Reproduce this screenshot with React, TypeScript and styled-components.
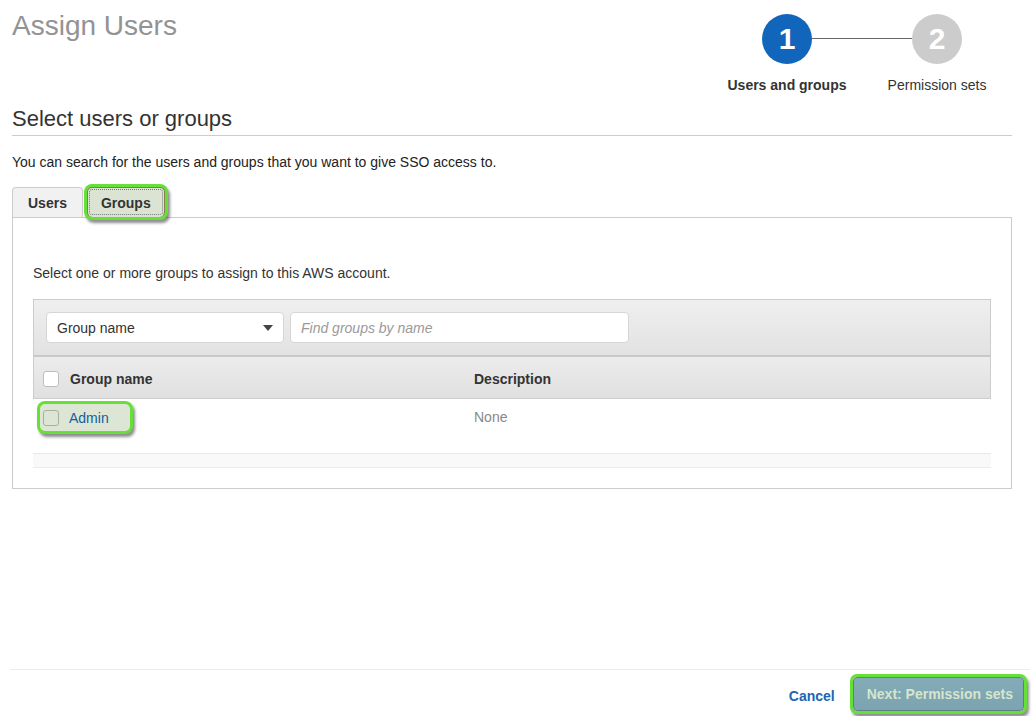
import React from "react";
import styled, { createGlobalStyle } from "styled-components";

const GlobalStyle = createGlobalStyle`
  html, body { margin: 0; padding: 0; background: #fff; }
  body {
    font-family: "Liberation Sans", Arial, Helvetica, sans-serif;
    color: #333;
    font-size: 14px;
  }
  * { box-sizing: border-box; }
`;

const HIGHLIGHT = `0 0 0 3px #66df38, 2px 3px 3px 3px rgba(0, 0, 0, 0.45)`;

const Page = styled.div`
  min-height: 100vh;
  display: flex;
  flex-direction: column;
`;

const Main = styled.main`
  flex: 1;
  width: 1012px;
  padding-left: 12px;
`;

const Header = styled.header`
  display: flex;
  justify-content: space-between;
  align-items: flex-start;
`;

const Title = styled.h1`
  margin: 0;
  padding-top: 9px;
  font-size: 28px;
  line-height: 34px;
  font-weight: normal;
  color: #939393;
`;

const Stepper = styled.div`
  display: flex;
  flex-direction: column;
  padding-top: 14px;
  width: 300px;
`;

const CircleRow = styled.div`
  display: flex;
  align-items: center;
  padding: 0 50px;
`;

const Circle = styled.div<{ $active?: boolean }>`
  width: 50px;
  height: 50px;
  border-radius: 50%;
  background: ${(p) => (p.$active ? "#1166bb" : "#cccccc")};
  color: #fff;
  font-weight: bold;
  font-size: 30px;
  display: flex;
  align-items: center;
  justify-content: center;
`;

const Connector = styled.div`
  flex: 1;
  height: 1px;
  margin-top: -2px;
  background: #666;
`;

const LabelRow = styled.div`
  display: flex;
  margin-top: 11px;
`;

const StepLabel = styled.div<{ $active?: boolean }>`
  width: 150px;
  text-align: center;
  line-height: 20px;
  font-size: 14px;
  color: #333;
  font-weight: ${(p) => (p.$active ? "bold" : "normal")};
`;

const SectionTitle = styled.h2`
  margin: 11px 0 0;
  font-size: 22px;
  line-height: 26px;
  font-weight: normal;
  color: #333;
  padding-bottom: 3px;
  border-bottom: 1px solid #cccccc;
`;

const Intro = styled.p`
  margin: 16px 0 0;
  line-height: 20px;
  color: #222;
`;

const TabBar = styled.div`
  display: flex;
  gap: 4px;
  margin-top: 15px;
  height: 30px;
  align-items: flex-end;
`;

const Tab = styled.div<{ $selected?: boolean }>`
  position: relative;
  z-index: 1;
  height: 30px;
  padding: 1px ${(p) => (p.$selected ? 13 : 15)}px 0;
  line-height: 29px;
  font-weight: bold;
  font-size: 14px;
  color: #333;
  border: 1px solid #cccccc;
  border-bottom: none;
  border-radius: 4px 4px 0 0;
  background: ${(p) => (p.$selected ? "#dbe4d2" : "#f1f1f1")};
  ${(p) =>
    p.$selected
      ? `border-radius: 5px; box-shadow: ${HIGHLIGHT}; border-color: #8b7a4a; outline: 1px dotted #777; outline-offset: -3px;`
      : ""}
`;

const Panel = styled.section`
  border: 1px solid #cccccc;
  padding: 45px 20px 20px 20px;
`;

const PanelText = styled.p`
  margin: 0;
  line-height: 20px;
  color: #333;
`;

const Table = styled.div`
  margin-top: 16px;
`;

const FilterBar = styled.div`
  display: flex;
  gap: 6px;
  padding: 12px 12px 12px;
  border: 1px solid #cccccc;
  border-bottom: 2px solid #c8c8c8;
  background: linear-gradient(#efefef, #e2e2e2);
`;

const Select = styled.div`
  width: 238px;
  height: 31px;
  background: #fff;
  border: 1px solid #d6d6d6;
  border-radius: 4px;
  padding: 0 10px;
  display: flex;
  align-items: center;
  justify-content: space-between;
  color: #333;
`;

const Caret = styled.span`
  width: 0;
  height: 0;
  border-left: 5px solid transparent;
  border-right: 5px solid transparent;
  border-top: 6px solid #444;
`;

const SearchInput = styled.input`
  width: 339px;
  height: 31px;
  border: 1px solid #d6d6d6;
  border-radius: 4px;
  padding: 0 10px;
  font-family: inherit;
  font-size: 14px;
  color: #333;
  background: #fff;
  outline: none;
  &::placeholder {
    color: #9a9a9a;
    font-style: italic;
  }
`;

const HeaderRow = styled.div`
  display: grid;
  grid-template-columns: 431px 1fr;
  align-items: center;
  height: 42px;
  padding-top: 2px;
  border: 1px solid #cccccc;
  border-top: none;
  background: linear-gradient(#ececec, #e0e0e0);
`;

const HeaderCell = styled.div`
  display: flex;
  align-items: center;
  gap: 11px;
  padding-left: 9px;
  font-weight: bold;
  color: #333;
`;

const Checkbox = styled.span<{ $muted?: boolean }>`
  display: inline-block;
  width: 16px;
  height: 16px;
  border-radius: 3px;
  border: 1px solid ${(p) => (p.$muted ? "#a9aea5" : "#bdbdbd")};
  background: ${(p) => (p.$muted ? "transparent" : "#fff")};
`;

const BodyRow = styled.div`
  display: grid;
  grid-template-columns: 431px 1fr;
  align-items: start;
  padding: 5px 0 22px 7px;
`;

const NameCell = styled.div`
  display: inline-flex;
  align-items: center;
  gap: 10px;
  height: 27px;
  width: 90px;
  padding-left: 3px;
  border-radius: 5px;
  background: #dde6d5;
  box-shadow: ${HIGHLIGHT};
`;

const NameLink = styled.a`
  color: #135f9e;
  text-decoration: none;
  font-size: 14px;
`;

const DescCell = styled.div`
  padding-left: 3px;
  line-height: 26px;
  color: #888;
`;

const Band = styled.div`
  height: 15px;
  background: #f9f9f9;
  border-top: 1px solid #e8e8e8;
  border-bottom: 1px solid #ececec;
`;

const Footer = styled.footer`
  margin: 0 5px 0 10px;
  height: 47px;
  border-top: 1px solid #ebebeb;
  display: flex;
  justify-content: flex-end;
  align-items: flex-start;
  gap: 18px;
  padding: 7px 6px 0 0;
`;

const CancelLink = styled.a`
  line-height: 34px;
  margin-top: 2px;
  font-weight: bold;
  color: #1d65b3;
  text-decoration: none;
`;

const PrimaryButton = styled.button`
  height: 34px;
  padding: 0 10px 0 13px;
  border: 1px solid #5f7f87;
  border-radius: 4px;
  background: linear-gradient(#84acb8, #7ba3b0);
  color: #d6e5cb;
  font-family: inherit;
  font-weight: bold;
  font-size: 14px;
  box-shadow: ${HIGHLIGHT};
`;

export default function App() {
  return (
    <Page>
      <GlobalStyle />
      <Main>
        <Header>
          <Title>Assign Users</Title>
          <Stepper>
            <CircleRow>
              <Circle $active>1</Circle>
              <Connector />
              <Circle>2</Circle>
            </CircleRow>
            <LabelRow>
              <StepLabel $active>Users and groups</StepLabel>
              <StepLabel>Permission sets</StepLabel>
            </LabelRow>
          </Stepper>
        </Header>

        <SectionTitle>Select users or groups</SectionTitle>
        <Intro>You can search for the users and groups that you want to give SSO access to.</Intro>

        <TabBar>
          <Tab>Users</Tab>
          <Tab $selected>Groups</Tab>
        </TabBar>
        <Panel>
          <PanelText>Select one or more groups to assign to this AWS account.</PanelText>
          <Table>
            <FilterBar>
              <Select>
                <span>Group name</span>
                <Caret />
              </Select>
              <SearchInput placeholder="Find groups by name" readOnly />
            </FilterBar>
            <HeaderRow>
              <HeaderCell>
                <Checkbox />
                <span>Group name</span>
              </HeaderCell>
              <HeaderCell>Description</HeaderCell>
            </HeaderRow>
            <BodyRow>
              <NameCell>
                <Checkbox $muted />
                <NameLink href="#">Admin</NameLink>
              </NameCell>
              <DescCell>None</DescCell>
            </BodyRow>
            <Band />
          </Table>
        </Panel>
      </Main>
      <Footer>
        <CancelLink href="#">Cancel</CancelLink>
        <PrimaryButton>Next: Permission sets</PrimaryButton>
      </Footer>
    </Page>
  );
}
